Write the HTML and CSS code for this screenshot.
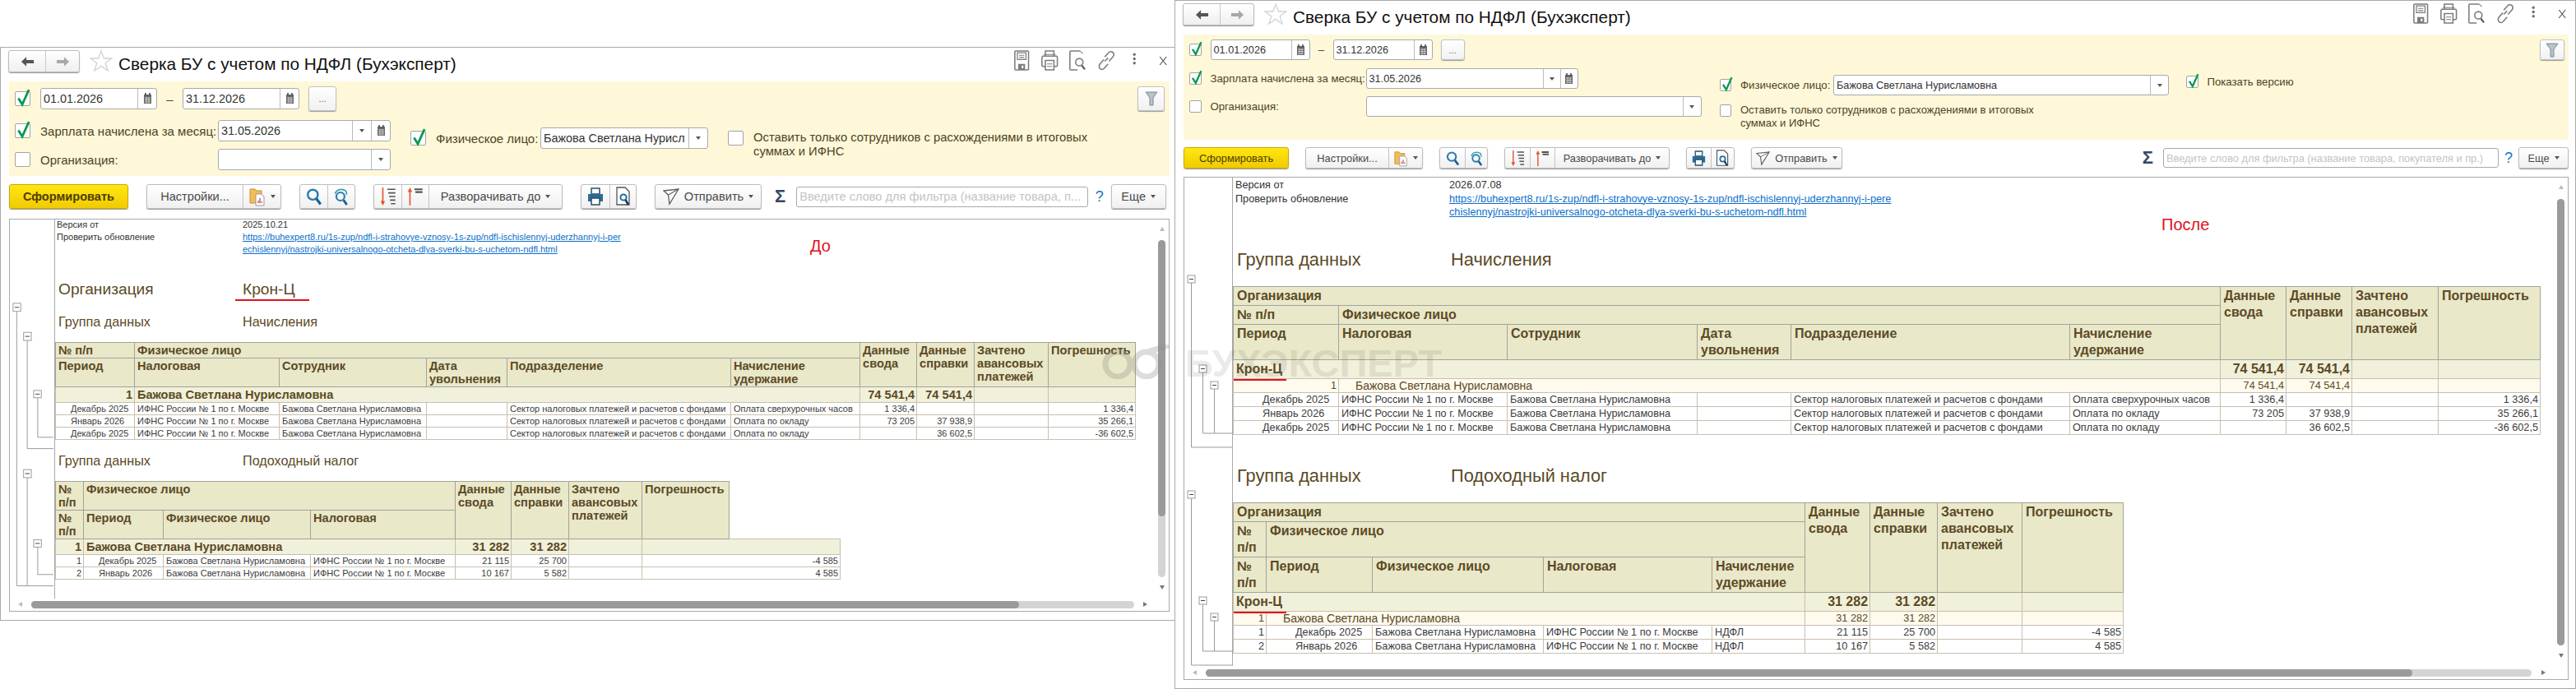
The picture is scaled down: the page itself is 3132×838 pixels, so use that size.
FILE: index.html
```html
<!DOCTYPE html>
<html lang="ru">
<head>
    <meta charset="UTF-8">
    <title>Сверка БУ с учетом по НДФЛ</title>
    <link rel="stylesheet" href="styles.css">
</head>
<body>
    <!-- shared icons -->
    <svg class="defs" width="0" height="0">
        <symbol id="i-back" viewBox="0 0 18 14"><path d="M1 7 7.500 1V5H17V9H7.500V13Z" fill="#555"/></symbol>
        <symbol id="i-fwd" viewBox="0 0 18 14"><path d="M17 7 10.500 1V5H1V9H10.500V13Z" fill="#a8a8a8"/></symbol>
        <symbol id="i-star" viewBox="0 0 28 26"><path d="M14 1 17.300 10H27L19.200 15.800 22.200 25 14 19.400 5.800 25 8.800 15.800 1 10H10.700Z" fill="#fff" stroke="#d0d4d6" stroke-width="1.300"/></symbol>
        <symbol id="i-cal" viewBox="0 0 11 14"><path d="M1 2H10V13H1Z" fill="#666"/><path d="M3 0V3M8 0V3" stroke="#444" stroke-width="1.500"/><path d="M2 6H9M2 8.500H9M2 11H9M4 5V12.500M7 5V12.500" stroke="#ddd" stroke-width=".8"/></symbol>
        <symbol id="i-check" viewBox="0 0 18 24"><path d="M2.500 13 7.500 21 16 2" fill="none" stroke="#0a9a52" stroke-width="3"/></symbol>
        <symbol id="i-folder" viewBox="0 0 20 24"><path d="M1 3H7L9 5H15V20H1Z" fill="#f0bd5a" stroke="#c98f2c"/><path d="M8 9H15L18 12V23H8Z" fill="#fff" stroke="#999"/><path d="M11 20V17M13 20V14M15 20V18" stroke="#c0504d" stroke-width="1.300"/></symbol>
        <symbol id="i-search" viewBox="0 0 18 20"><circle cx="7.500" cy="8" r="5.500" fill="none" stroke="#2a7db0" stroke-width="2.200"/><path d="M11.500 12.500 16 18.500" stroke="#1c5f8c" stroke-width="2.800"/></symbol>
        <symbol id="i-refind" viewBox="0 0 18 20"><circle cx="8" cy="10" r="4.500" fill="none" stroke="#2a7db0" stroke-width="2"/><path d="M11.500 14 15 19" stroke="#1c5f8c" stroke-width="2.600"/><path d="M2 7C4 2 10 1 14 4L15 8" fill="none" stroke="#39a0a8" stroke-width="1.500"/></symbol>
        <symbol id="i-sort-d" viewBox="0 0 18 22"><path d="M3 1V19" stroke="#e0572a" stroke-width="1.500"/><path d="M.5 16 3 21 5.500 16Z" fill="#e0572a"/><path d="M8 3H17M9 7H17M10 11H17M11 15H17M12 19H17" stroke="#555" stroke-width="1.500"/></symbol>
        <symbol id="i-sort-u" viewBox="0 0 18 22"><path d="M3 3V21" stroke="#e0572a" stroke-width="1.500"/><path d="M.5 6 3 1 5.500 6Z" fill="#e0572a"/><path d="M8 3H17M9 6H17" stroke="#555" stroke-width="2"/></symbol>
        <symbol id="i-print" viewBox="0 0 20 22"><path d="M5 1H15V8H5Z" fill="#fff" stroke="#24506e" stroke-width="1.500"/><path d="M1 8H19V17H1Z" fill="#2c6c94"/><path d="M5 13H15V21H5Z" fill="#fff" stroke="#24506e" stroke-width="1.500"/></symbol>
        <symbol id="i-preview" viewBox="0 0 18 24"><path d="M1 1H11L16 6V22H1Z" fill="#fff" stroke="#555" stroke-width="1.300"/><circle cx="9" cy="13" r="3.600" fill="none" stroke="#1c6da0" stroke-width="2"/><path d="M11.500 16 15 22" stroke="#123f60" stroke-width="2.600"/></symbol>
        <symbol id="i-send" viewBox="0 0 20 20"><path d="M1 3 19 1 8 19 6.500 8Z" fill="#fff" stroke="#5c5c5c" stroke-width="1.300"/><path d="M6.500 8 19 1" stroke="#5c5c5c" stroke-width="1.100"/></symbol>
        <symbol id="i-funnel" viewBox="0 0 16 18"><path d="M1 1H15L10 8V17H6V8Z" fill="#b9c2c9" stroke="#7d8a94"/></symbol>
        <symbol id="i-save" viewBox="0 0 18 24"><path d="M1 2C1 1 2 1 2 1H16C17 1 17 2 17 2V22C17 23 16 23 16 23H2C1 23 1 22 1 22Z" fill="none" stroke="#7c7c7c" stroke-width="1.500"/><path d="M4 3H14V11H4Z" fill="none" stroke="#7c7c7c" stroke-width="1.200"/><path d="M6 6H12M6 8.500H12" stroke="#7c7c7c"/><path d="M5 16H13V23H5Z" fill="#7c7c7c"/><path d="M9 18H11V21H9Z" fill="#fff"/></symbol>
        <symbol id="i-hprint" viewBox="0 0 20 24"><path d="M5 7V1H15V7" fill="none" stroke="#7c7c7c" stroke-width="1.500"/><path d="M5 19H2C1 19 1 18 1 18V9C1 8 2 7 2 7H18C19 7 19 8 19 9V18C19 19 18 19 18 19H15" fill="none" stroke="#7c7c7c" stroke-width="1.500"/><path d="M5 12H15V23H5Z" fill="#fff" stroke="#7c7c7c" stroke-width="1.500"/><path d="M7 16H13M7 19H13M3 5H17" stroke="#7c7c7c"/></symbol>
        <symbol id="i-hdoc" viewBox="0 0 20 24"><path d="M13 1H2C1 1 1 2 1 2V22C1 23 2 23 2 23H10" fill="none" stroke="#7c7c7c" stroke-width="1.500"/><path d="M13 1 16 4" stroke="#7c7c7c"/><circle cx="12" cy="14" r="4.300" fill="none" stroke="#7c7c7c" stroke-width="1.500"/><path d="M15 18 18.500 22.500" stroke="#555" stroke-width="2"/></symbol>
        <symbol id="i-link" viewBox="0 0 20 24"><path d="M8 8 12 3.500C13.500 1.500 16 1 17.500 2.500S19 6 17.500 8L13 13M12 9 8 13M12 16 7.500 21C6 23 3.500 23 2.500 21.500S1 18 2.500 16L7 11" fill="none" stroke="#7c7c7c" stroke-width="1.500"/></symbol>
        <symbol id="i-dots" viewBox="0 0 6 20"><circle cx="3" cy="3" r="2.200" fill="#6f6f6f"/><circle cx="3" cy="10" r="2.200" fill="#6f6f6f"/><circle cx="3" cy="17" r="2.200" fill="#6f6f6f"/></symbol>
        <symbol id="i-close" viewBox="0 0 10 12"><path d="M1 1 9 11M9 1 1 11" stroke="#555" stroke-width="1.200"/></symbol>
    </svg>

    <!-- watermark lies over both windows -->
    <svg class="wm-logo" viewBox="0 0 82 42"><circle cx="19" cy="24" r="15" fill="none" stroke="#8f8f86" stroke-width="7"/><circle cx="54" cy="24" r="15" fill="none" stroke="#8f8f86" stroke-width="7"/><path d="M55 9 81 1" stroke="#8f8f86" stroke-width="7"/></svg>
    <div class="wm-text">БУХЭКСПЕРТ</div>

    <section class="win win-a">
        <header class="head">
            <div class="nav">
                <button><svg class="ic-arrow"><use href="#i-back"/></svg></button>
                <button><svg class="ic-arrow"><use href="#i-fwd"/></svg></button>
            </div>
            <svg class="star"><use href="#i-star"/></svg>
            <h1>Сверка БУ с учетом по НДФЛ (Бухэксперт)</h1>
            <div class="head-icons">
                <svg><use href="#i-save"/></svg>
                <svg><use href="#i-hprint"/></svg>
                <svg><use href="#i-hdoc"/></svg>
                <svg><use href="#i-link"/></svg>
                <svg class="ic-dots"><use href="#i-dots"/></svg>
                <svg class="ic-close"><use href="#i-close"/></svg>
            </div>
        </header>

        <div class="filters">
            <div class="filter-col">
                <div class="row row-period">
                    <span class="cb on"><svg><use href="#i-check"/></svg></span>
                    <div class="field f-date"><span>01.01.2026</span><i><svg class="ic-cal"><use href="#i-cal"/></svg></i></div>
                    <span class="dash">–</span>
                    <div class="field f-date"><span>31.12.2026</span><i><svg class="ic-cal"><use href="#i-cal"/></svg></i></div>
                    <button class="btn-more">...</button>
                </div>
                <div class="row row-salary">
                    <span class="cb on"><svg><use href="#i-check"/></svg></span>
                    <label>Зарплата начислена за месяц:</label>
                    <div class="field f-month"><span>31.05.2026</span><i><b class="caret"></b></i><i><svg class="ic-cal"><use href="#i-cal"/></svg></i></div>
                </div>
                <div class="row row-org">
                    <span class="cb"></span>
                    <label>Организация:</label>
                    <div class="field f-org"><span></span><i><b class="caret"></b></i></div>
                </div>
            </div>
            <div class="filter-mid">
                <div class="row row-person">
                    <span class="cb on"><svg><use href="#i-check"/></svg></span>
                    <label>Физическое лицо:</label>
                    <div class="field f-person"><span>Бажова Светлана Нурисл</span><i><b class="caret"></b></i></div>
                </div>
                <div class="row row-only">
                    <span class="cb"></span>
                    <label>Оставить только сотрудников с расхождениями в итоговых<br>суммах и ИФНС</label>
                </div>
            </div>
            <button class="btn-filter"><svg><use href="#i-funnel"/></svg></button>
        </div>

        <div class="toolbar">
            <button class="btn-main">Сформировать</button>
            <div class="group g-settings">
                <span>Настройки...</span>
                <span><svg class="ic-tb"><use href="#i-folder"/></svg><b class="caret"></b></span>
            </div>
            <div class="group g-search">
                <span><svg class="ic-tb"><use href="#i-search"/></svg></span>
                <span><svg class="ic-tb"><use href="#i-refind"/></svg></span>
            </div>
            <div class="group g-expand">
                <span><svg class="ic-tb"><use href="#i-sort-d"/></svg></span>
                <span><svg class="ic-tb"><use href="#i-sort-u"/></svg></span>
                <span>Разворачивать до<b class="caret"></b></span>
            </div>
            <div class="group g-print">
                <span><svg class="ic-tb"><use href="#i-print"/></svg></span>
                <span><svg class="ic-tb"><use href="#i-preview"/></svg></span>
            </div>
            <div class="group g-send">
                <span><svg class="ic-tb"><use href="#i-send"/></svg>Отправить<b class="caret"></b></span>
            </div>
            <span class="sigma">Σ</span>
            <div class="search-box">Введите слово для фильтра (название товара, п...</div>
            <span class="help">?</span>
            <div class="group g-more"><span>Еще<b class="caret"></b></span></div>
        </div>

        <div class="frame">
            <div class="gutter">
                <svg viewBox="12 267 55 462">
                    <path class="tree" d="M20.500 377V717H66M33.500 413V547H66M46.500 484V533H66M33.500 583V717M46.500 669V703H66"/>
                    <g class="node"><rect x="16" y="367" width="9.500" height="10"/><path d="M18 372H23.500"/></g>
                    <g class="node"><rect x="29" y="403" width="9.500" height="10"/><path d="M31 408H36.500"/></g>
                    <g class="node"><rect x="41.500" y="475" width="9.500" height="9"/><path d="M43.500 479.500H49"/></g>
                    <g class="node"><rect x="29" y="573" width="9.500" height="10"/><path d="M31 578H36.500"/></g>
                    <g class="node"><rect x="41.500" y="660" width="9.500" height="9"/><path d="M43.500 664.500H49"/></g>
                </svg>
            </div>
            <div class="sheet">
                <div class="meta">
                    <span>Версия от</span><span>2025.10.21</span>
                    <span>Проверить обновление</span>
                    <a href="#">https://buhexpert8.ru/1s-zup/ndfl-i-strahovye-vznosy-1s-zup/ndfl-ischislennyj-uderzhannyj-i-per<br>echislennyj/nastrojki-universalnogo-otcheta-dlya-sverki-bu-s-uchetom-ndfl.html</a>
                </div>
                <div class="line line-org"><span>Организация</span><span class="marked">Крон-Ц</span></div>
                <div class="line line-group"><span>Группа данных</span><span>Начисления</span></div>
                <table class="rep t1">
                    <colgroup><col width="96"><col width="176"><col width="179"><col width="98"><col width="272"><col width="157"><col width="69"><col width="70"><col width="90"><col width="106"></colgroup>
                    <tr class="h19"><th>№ п/п</th><th colspan="5">Физическое лицо</th><th rowspan="2">Данные<br>свода</th><th rowspan="2">Данные<br>справки</th><th rowspan="2">Зачтено<br>авансовых<br>платежей</th><th rowspan="2">Погрешность</th></tr>
                    <tr class="h35"><th>Период</th><th>Налоговая</th><th>Сотрудник</th><th>Дата<br>увольнения</th><th>Подразделение</th><th>Начисление<br>удержание</th></tr>
                    <tr class="grp h19"><td class="num">1</td><td colspan="5">Бажова Светлана Нурисламовна</td><td class="num">74 541,4</td><td class="num">74 541,4</td><td></td><td></td></tr>
                    <tr class="dat"><td class="per">Декабрь 2025</td><td>ИФНС России № 1 по г. Москве</td><td>Бажова Светлана Нурисламовна</td><td></td><td>Сектор налоговых платежей и расчетов с фондами</td><td>Оплата сверхурочных часов</td><td class="num">1 336,4</td><td></td><td></td><td class="num">1 336,4</td></tr>
                    <tr class="dat"><td class="per">Январь 2026</td><td>ИФНС России № 1 по г. Москве</td><td>Бажова Светлана Нурисламовна</td><td></td><td>Сектор налоговых платежей и расчетов с фондами</td><td>Оплата по окладу</td><td class="num">73 205</td><td class="num">37 938,9</td><td></td><td class="num">35 266,1</td></tr>
                    <tr class="dat"><td class="per">Декабрь 2025</td><td>ИФНС России № 1 по г. Москве</td><td>Бажова Светлана Нурисламовна</td><td></td><td>Сектор налоговых платежей и расчетов с фондами</td><td>Оплата по окладу</td><td></td><td class="num">36 602,5</td><td></td><td class="num">-36 602,5</td></tr>
                </table>
                <div class="line line-group2"><span>Группа данных</span><span>Подоходный налог</span></div>
                <table class="rep t2">
                    <colgroup><col width="34"><col width="97"><col width="179"><col width="176"><col width="68"><col width="70"><col width="89"><col width="106"><col width="135"></colgroup>
                    <tr class="h35"><th>№<br>п/п</th><th colspan="3">Физическое лицо</th><th rowspan="2">Данные<br>свода</th><th rowspan="2">Данные<br>справки</th><th rowspan="2">Зачтено<br>авансовых<br>платежей</th><th rowspan="2">Погрешность</th><th rowspan="2" class="blank"></th></tr>
                    <tr class="h35"><th>№<br>п/п</th><th>Период</th><th>Физическое лицо</th><th>Налоговая</th></tr>
                    <tr class="grp h19"><td class="num">1</td><td colspan="3">Бажова Светлана Нурисламовна</td><td class="num">31 282</td><td class="num">31 282</td><td></td><td colspan="2"></td></tr>
                    <tr class="dat"><td class="num">1</td><td class="per">Декабрь 2025</td><td>Бажова Светлана Нурисламовна</td><td>ИФНС России № 1 по г. Москве</td><td class="num">21 115</td><td class="num">25 700</td><td></td><td colspan="2" class="num">-4 585</td></tr>
                    <tr class="dat"><td class="num">2</td><td class="per">Январь 2026</td><td>Бажова Светлана Нурисламовна</td><td>ИФНС России № 1 по г. Москве</td><td class="num">10 167</td><td class="num">5 582</td><td></td><td colspan="2" class="num">4 585</td></tr>
                </table>
                <div class="note">До</div>
            </div>
            <b class="arr arr-up"></b><b class="arr arr-down"></b><b class="arr arr-left"></b><b class="arr arr-right"></b>
            <div class="vbar"><i></i></div>
            <div class="hbar"><i></i></div>
        </div>
    </section>

    <section class="win win-b">
        <header class="head">
            <div class="nav">
                <button><svg class="ic-arrow"><use href="#i-back"/></svg></button>
                <button><svg class="ic-arrow"><use href="#i-fwd"/></svg></button>
            </div>
            <svg class="star"><use href="#i-star"/></svg>
            <h1>Сверка БУ с учетом по НДФЛ (Бухэксперт)</h1>
            <div class="head-icons">
                <svg><use href="#i-save"/></svg>
                <svg><use href="#i-hprint"/></svg>
                <svg><use href="#i-hdoc"/></svg>
                <svg><use href="#i-link"/></svg>
                <svg class="ic-dots"><use href="#i-dots"/></svg>
                <svg class="ic-close"><use href="#i-close"/></svg>
            </div>
        </header>

        <div class="filters">
            <div class="filter-col">
                <div class="row row-period">
                    <span class="cb on"><svg><use href="#i-check"/></svg></span>
                    <div class="field f-date"><span>01.01.2026</span><i><svg class="ic-cal"><use href="#i-cal"/></svg></i></div>
                    <span class="dash">–</span>
                    <div class="field f-date"><span>31.12.2026</span><i><svg class="ic-cal"><use href="#i-cal"/></svg></i></div>
                    <button class="btn-more">...</button>
                </div>
                <div class="row row-salary">
                    <span class="cb on"><svg><use href="#i-check"/></svg></span>
                    <label>Зарплата начислена за месяц:</label>
                    <div class="field f-month"><span>31.05.2026</span><i><b class="caret"></b></i><i><svg class="ic-cal"><use href="#i-cal"/></svg></i></div>
                </div>
                <div class="row row-org">
                    <span class="cb"></span>
                    <label>Организация:</label>
                    <div class="field f-org"><span></span><i><b class="caret"></b></i></div>
                </div>
            </div>
            <div class="filter-mid">
                <div class="row row-person">
                    <span class="cb on"><svg><use href="#i-check"/></svg></span>
                    <label>Физическое лицо:</label>
                    <div class="field f-person"><span>Бажова Светлана Нурисламовна</span><i><b class="caret"></b></i></div>
                </div>
                <div class="row row-only">
                    <span class="cb"></span>
                    <label>Оставить только сотрудников с расхождениями в итоговых<br>суммах и ИФНС</label>
                </div>
            </div>
            <div class="row row-version">
                <span class="cb on"><svg><use href="#i-check"/></svg></span>
                <label>Показать версию</label>
            </div>
            <button class="btn-filter"><svg><use href="#i-funnel"/></svg></button>
        </div>

        <div class="toolbar">
            <button class="btn-main">Сформировать</button>
            <div class="group g-settings">
                <span>Настройки...</span>
                <span><svg class="ic-tb"><use href="#i-folder"/></svg><b class="caret"></b></span>
            </div>
            <div class="group g-search">
                <span><svg class="ic-tb"><use href="#i-search"/></svg></span>
                <span><svg class="ic-tb"><use href="#i-refind"/></svg></span>
            </div>
            <div class="group g-expand">
                <span><svg class="ic-tb"><use href="#i-sort-d"/></svg></span>
                <span><svg class="ic-tb"><use href="#i-sort-u"/></svg></span>
                <span>Разворачивать до<b class="caret"></b></span>
            </div>
            <div class="group g-print">
                <span><svg class="ic-tb"><use href="#i-print"/></svg></span>
                <span><svg class="ic-tb"><use href="#i-preview"/></svg></span>
            </div>
            <div class="group g-send">
                <span><svg class="ic-tb"><use href="#i-send"/></svg>Отправить<b class="caret"></b></span>
            </div>
            <span class="sigma">Σ</span>
            <div class="search-box">Введите слово для фильтра (название товара, покупателя и пр.)</div>
            <span class="help">?</span>
            <div class="group g-more"><span>Еще<b class="caret"></b></span></div>
        </div>

        <div class="frame">
            <div class="gutter">
                <svg viewBox="1440 216 58 594">
                    <path class="tree" d="M1448.500 344V544H1498M1462.500 453V527H1498M1476.500 473V527M1448.500 606V809H1498M1462.500 735V792H1498M1476.500 755V792"/>
                    <g class="node"><rect x="1444" y="335" width="9" height="9"/><path d="M1446 339.500H1451"/></g>
                    <g class="node"><rect x="1458" y="444" width="9" height="9"/><path d="M1460 448.500H1465"/></g>
                    <g class="node"><rect x="1472" y="464" width="9" height="9"/><path d="M1474 468.500H1479"/></g>
                    <g class="node"><rect x="1444" y="597" width="9" height="9"/><path d="M1446 601.500H1451"/></g>
                    <g class="node"><rect x="1458" y="726" width="9" height="9"/><path d="M1460 730.500H1465"/></g>
                    <g class="node"><rect x="1472" y="746" width="9" height="9"/><path d="M1474 750.500H1479"/></g>
                </svg>
            </div>
            <div class="sheet">
                <div class="meta">
                    <span>Версия от</span><span>2026.07.08</span>
                    <span>Проверить обновление</span>
                    <a href="#">https://buhexpert8.ru/1s-zup/ndfl-i-strahovye-vznosy-1s-zup/ndfl-ischislennyj-uderzhannyj-i-pere<br>chislennyj/nastrojki-universalnogo-otcheta-dlya-sverki-bu-s-uchetom-ndfl.html</a>
                </div>
                <div class="line line-group"><span>Группа данных</span><span>Начисления</span></div>
                <table class="rep t1">
                    <colgroup><col width="128"><col width="205"><col width="231"><col width="114"><col width="339"><col width="183"><col width="80"><col width="80"><col width="105"><col width="124"></colgroup>
                    <tr class="h23"><th colspan="6">Организация</th><th rowspan="3">Данные<br>свода</th><th rowspan="3">Данные<br>справки</th><th rowspan="3">Зачтено<br>авансовых<br>платежей</th><th rowspan="3">Погрешность</th></tr>
                    <tr class="h23"><th>№ п/п</th><th colspan="5">Физическое лицо</th></tr>
                    <tr class="h43"><th>Период</th><th>Налоговая</th><th>Сотрудник</th><th>Дата<br>увольнения</th><th>Подразделение</th><th>Начисление<br>удержание</th></tr>
                    <tr class="grp h23"><td colspan="6"><span class="marked">Крон-Ц</span></td><td class="num">74 541,4</td><td class="num">74 541,4</td><td></td><td></td></tr>
                    <tr class="sub"><td class="num">1</td><td colspan="5" class="name">Бажова Светлана Нурисламовна</td><td class="num">74 541,4</td><td class="num">74 541,4</td><td></td><td></td></tr>
                    <tr class="dat"><td class="per">Декабрь 2025</td><td>ИФНС России № 1 по г. Москве</td><td>Бажова Светлана Нурисламовна</td><td></td><td>Сектор налоговых платежей и расчетов с фондами</td><td>Оплата сверхурочных часов</td><td class="num">1 336,4</td><td></td><td></td><td class="num">1 336,4</td></tr>
                    <tr class="dat"><td class="per">Январь 2026</td><td>ИФНС России № 1 по г. Москве</td><td>Бажова Светлана Нурисламовна</td><td></td><td>Сектор налоговых платежей и расчетов с фондами</td><td>Оплата по окладу</td><td class="num">73 205</td><td class="num">37 938,9</td><td></td><td class="num">35 266,1</td></tr>
                    <tr class="dat"><td class="per">Декабрь 2025</td><td>ИФНС России № 1 по г. Москве</td><td>Бажова Светлана Нурисламовна</td><td></td><td>Сектор налоговых платежей и расчетов с фондами</td><td>Оплата по окладу</td><td></td><td class="num">36 602,5</td><td></td><td class="num">-36 602,5</td></tr>
                </table>
                <div class="line line-group2"><span>Группа данных</span><span>Подоходный налог</span></div>
                <table class="rep t2">
                    <colgroup><col width="40"><col width="129"><col width="208"><col width="205"><col width="113"><col width="79"><col width="82"><col width="103"><col width="123"></colgroup>
                    <tr class="h23"><th colspan="5">Организация</th><th rowspan="3">Данные<br>свода</th><th rowspan="3">Данные<br>справки</th><th rowspan="3">Зачтено<br>авансовых<br>платежей</th><th rowspan="3">Погрешность</th></tr>
                    <tr class="h43"><th>№<br>п/п</th><th colspan="4">Физическое лицо</th></tr>
                    <tr class="h43"><th>№<br>п/п</th><th>Период</th><th>Физическое лицо</th><th>Налоговая</th><th>Начисление<br>удержание</th></tr>
                    <tr class="grp h23"><td colspan="5"><span class="marked">Крон-Ц</span></td><td class="num">31 282</td><td class="num">31 282</td><td></td><td></td></tr>
                    <tr class="sub"><td class="num">1</td><td colspan="4" class="name">Бажова Светлана Нурисламовна</td><td class="num">31 282</td><td class="num">31 282</td><td></td><td></td></tr>
                    <tr class="dat"><td class="num">1</td><td class="per">Декабрь 2025</td><td>Бажова Светлана Нурисламовна</td><td>ИФНС России № 1 по г. Москве</td><td>НДФЛ</td><td class="num">21 115</td><td class="num">25 700</td><td></td><td class="num">-4 585</td></tr>
                    <tr class="dat"><td class="num">2</td><td class="per">Январь 2026</td><td>Бажова Светлана Нурисламовна</td><td>ИФНС России № 1 по г. Москве</td><td>НДФЛ</td><td class="num">10 167</td><td class="num">5 582</td><td></td><td class="num">4 585</td></tr>
                </table>
                <div class="note">После</div>
            </div>
            <b class="arr arr-up"></b><b class="arr arr-down"></b><b class="arr arr-left"></b><b class="arr arr-right"></b>
            <div class="vbar"><i></i></div>
            <div class="hbar"><i></i></div>
        </div>
    </section>
</body>
</html>
```

FILE: styles.css
```css
body {
    margin: 0;
    background-color: #fff;
    font-family: "Liberation Sans", Arial, sans-serif;
    color: #333;
    overflow: hidden;
}
.defs {
    position: absolute;
}
button {
    font-family: inherit;
    padding: 0;
}

/* two screenshots side by side */
.win {
    position: absolute;
    box-sizing: border-box;
    display: flex;
    flex-direction: column;
    background-color: #fff;
    border: 1px solid #a9a9a9;
}
.win-a {
    left: 0;
    top: 57px;
    width: 1428px;
    height: 698px;
    border-right: none;
    padding: 0 6px 0 9px;
}
.win-b {
    left: 1428px;
    top: 0;
    width: 1704px;
    height: 838px;
    padding: 0 8px 0 10px;
}

/* header */
.head {
    height: 41px;
    flex: none;
    display: flex;
    align-items: flex-start;
    padding-top: 3px;
    box-sizing: border-box;
}
.nav {
    display: grid;
    grid-template-columns: 44px 41px;
    height: 27px;
    border: 1px solid #bbb;
    border-radius: 3px;
    box-sizing: border-box;
    box-shadow: 0 1px 1px #999;
    background: linear-gradient(#fff, #efefef);
}
.win-b .nav {
    margin-left: -1px;
}
.nav button {
    border: none;
    background: none;
    display: flex;
    align-items: center;
    justify-content: center;
}
.nav button + button {
    border-left: 1px solid #c8c8c8;
}
.ic-arrow {
    width: 17px;
    height: 14px;
}
.star {
    width: 28px;
    height: 26px;
    margin-left: 12px;
}
.head h1 {
    margin: 2px 0 0 7px;
    font-weight: normal;
    font-size: 20.800px;
    line-height: 30px;
    color: #111;
}
.head-icons {
    margin-left: auto;
    margin-right: -4px;
    height: 25px;
    display: flex;
    align-items: center;
    gap: 10px;
}
.head-icons svg {
    width: 24.400px;
    height: 25px;
}
.head-icons .ic-dots {
    height: 15px;
    margin-top: -4px;
}
.head-icons .ic-close {
    height: 12px;
}

/* yellow filter panel */
.filters {
    flex: none;
    display: flex;
    box-sizing: border-box;
    background-color: #fef8d9;
}
.win-a .filters {
    --fs: 15px;
    --ffs: 14.400px;
    height: 115px;
    padding: 6px 6px 0 7px;
    margin-left: 1px;
}
.win-b .filters {
    --fs: 13.200px;
    --ffs: 12.700px;
    height: 128px;
    padding: 6px 5px 0 7px;
}
.row {
    display: flex;
    align-items: center;
}
.filters label {
    font-size: var(--fs);
    color: #4e4326;
    white-space: nowrap;
}
.win-a .row-only label {
    font-size: 14.800px;
}
.win-b .row-only label {
    font-size: 13px;
}
.cb {
    position: relative;
    flex: none;
    box-sizing: border-box;
    border: 1px solid #a3a3a3;
    border-radius: 2px;
    background-color: #fff;
}
.cb svg {
    position: absolute;
    left: 1px;
    top: -5px;
}
.win-a .cb {
    width: 19px;
    height: 18px;
    margin-right: 12px;
}
.win-a .cb svg {
    width: 17px;
    height: 23px;
}
.win-b .cb {
    width: 14.500px;
    height: 15px;
    margin-right: 11px;
}
.win-b .cb svg {
    width: 14px;
    height: 20px;
}
.field {
    flex: none;
    display: flex;
    box-sizing: border-box;
    border: 1px solid #a9a9a9;
    border-radius: 3px;
    background-color: #fff;
    font-size: var(--ffs);
    color: #333;
}
.field span {
    flex: 1;
    padding-left: 3px;
    white-space: nowrap;
    overflow: hidden;
    align-self: center;
}
.field i {
    flex: none;
    display: flex;
    align-items: center;
    justify-content: center;
    border-left: 1px solid #bbb;
}
.caret {
    display: inline-block;
    width: 0;
    height: 0;
    border-left: 3.500px solid transparent;
    border-right: 3.500px solid transparent;
    border-top: 4px solid #555;
}
.ic-cal {
    width: 11px;
    height: 14px;
}
.dash {
    text-align: center;
    font-size: var(--fs);
    color: #444;
}
.btn-more, .btn-filter {
    flex: none;
    box-sizing: border-box;
    border: 1px solid #c2c2c2;
    border-radius: 3px;
    background: linear-gradient(#fff, #f1f1f1);
    box-shadow: 0 1px 1px #999;
    color: #666;
    font-size: 11px;
    display: flex;
    align-items: center;
    justify-content: center;
}
.btn-filter {
    margin-left: auto;
}
.btn-filter svg {
    width: 16px;
    height: 18px;
}

/* filter sizes, left window */
.win-a .filter-col .row, .win-a .field {
    height: 26px;
}
.win-a .filter-col .row-period {
    height: 30px;
}
.win-a .f-date {
    width: 142px;
}
.win-a .f-date i {
    width: 22px;
}
.win-a .dash {
    width: 31px;
}
.win-a .btn-more {
    width: 34px;
    height: 30px;
    margin-left: 11px;
}
.win-a .row-salary {
    margin-top: 11px;
}
.win-a .row-org {
    margin-top: 9px;
}
.win-a .filter-col label {
    width: 216px;
}
.win-a .f-month, .win-a .f-org {
    width: 210px;
}
.win-a .f-month i {
    width: 22px;
}
.win-a .f-org i {
    width: 22px;
}
.win-a .filter-mid {
    display: flex;
    align-items: flex-start;
    margin: 50px 0 0 24px;
}
.win-a .row-person label {
    width: 127px;
}
.win-a .f-person {
    width: 204px;
}
.win-a .f-person i {
    width: 22px;
}
.win-a .row-only {
    align-items: flex-start;
    margin: 4px 0 0 24px;
    line-height: 17px;
}
.win-a .btn-filter {
    width: 33px;
    height: 30px;
}

/* filter sizes, right window */
.win-b .filter-col .row, .win-b .field {
    height: 25px;
}
.win-b .f-date {
    width: 121px;
}
.win-b .f-date i {
    width: 21px;
}
.win-b .dash {
    width: 28px;
}
.win-b .btn-more {
    width: 29px;
    height: 25px;
    margin-left: 10px;
}
.win-b .row-salary {
    margin-top: 10px;
}
.win-b .row-org {
    margin-top: 9px;
}
.win-b .filter-col label {
    width: 189px;
}
.win-b .f-month {
    width: 258px;
}
.win-b .f-month i {
    width: 20px;
}
.win-b .f-org {
    width: 408px;
}
.win-b .f-org i {
    width: 21px;
}
.win-b .filter-mid {
    margin: 43px 0 0 22px;
}
.win-b .row-person label {
    width: 113px;
}
.win-b .f-person {
    width: 408px;
}
.win-b .f-person i {
    width: 21px;
}
.win-b .row-only {
    align-items: flex-start;
    margin-top: 10px;
    line-height: 16px;
}
.win-b .row-only .cb {
    margin-top: 1px;
}
.win-b .row-version {
    align-items: center;
    height: 17px;
    margin: 43px 0 0 21px;
}
.win-b .btn-filter {
    width: 30px;
    height: 25px;
}

/* toolbar */
.toolbar {
    flex: none;
    display: flex;
    align-items: center;
}
.win-a .toolbar {
    --fs: 14.600px;
    height: 30px;
    margin: 10px 0 12px 1px;
    gap: 22px;
}
.win-b .toolbar {
    --fs: 12.800px;
    height: 26px;
    margin: 9px 0 10px 0;
    gap: 20px;
}
.btn-main {
    flex: none;
    height: 100%;
    box-sizing: border-box;
    border: 1px solid #c9a800;
    border-radius: 3px;
    background: linear-gradient(#ffe713, #f0cb00);
    box-shadow: 0 1px 1px #999;
    font-size: var(--fs);
    font-weight: bold;
    color: #4d3c00;
}
.win-a .btn-main {
    width: 145px;
}
.win-b .btn-main {
    width: 128px;
    font-weight: normal;
}
.group {
    flex: none;
    display: grid;
    height: 100%;
    box-sizing: border-box;
    border: 1px solid #bdbdbd;
    border-radius: 3px;
    background: linear-gradient(#fff, #f0f0f0);
    box-shadow: 0 1px 1px #999;
    font-size: var(--fs);
    color: #4a4a4a;
}
.group span {
    display: flex;
    align-items: center;
    justify-content: center;
    gap: 6px;
    white-space: nowrap;
}
.group span + span {
    border-left: 1px solid #c4c4c4;
}
.ic-tb {
    width: 20px;
    height: 24px;
}
.win-b .ic-tb {
    width: 17px;
    height: 21px;
}
.win-a .g-settings { grid-template-columns: 116px 46px; }
.win-a .g-search { grid-template-columns: 33px 33px; }
.win-a .g-expand { grid-template-columns: 33px 33px 162px; }
.win-a .g-print { grid-template-columns: 34px 32px; }
.win-a .g-send { grid-template-columns: 128px; }
.win-a .g-more { grid-template-columns: 65px; }
.win-b .g-settings { grid-template-columns: 100px 41px; }
.win-b .g-search { grid-template-columns: 30px 27px; }
.win-b .g-expand { grid-template-columns: 30px 30px 139px; }
.win-b .g-print { grid-template-columns: 29px 28px; }
.win-b .g-send { grid-template-columns: 109px; }
.win-b .g-more { grid-template-columns: 59px; }
.sigma {
    font-size: 22px;
    font-weight: bold;
    color: #33495e;
    line-height: 1;
}
.win-a .sigma {
    margin-left: -6px;
}
.win-a .search-box {
    width: 354.500px;
    height: 25px;
    margin-left: -9px;
}
.win-a .help {
    margin-left: -13px;
}
.win-a .g-more {
    margin-left: -13px;
}
.win-b .sigma {
    margin-left: auto;
}
.win-b .search-box {
    width: 408px;
    height: 24px;
    margin-left: -8px;
}
.win-b .help {
    margin-left: -13px;
}
.win-b .g-more {
    margin-left: -13px;
}
.search-box {
    flex: none;
    box-sizing: border-box;
    border: 1px solid #a9a9a9;
    border-radius: 3px;
    background-color: #fff;
    padding-left: 3px;
    display: flex;
    align-items: center;
    white-space: nowrap;
    overflow: hidden;
    font-size: var(--fs);
    color: #c4c4c4;
}
.help {
    font-size: 18px;
    color: #1777c4;
}

/* report frame */
.frame {
    position: relative;
    flex: none;
    display: flex;
    align-items: flex-start;
    box-sizing: border-box;
    border: 1px solid #a9a9a9;
    overflow: hidden;
}
.win-a .frame {
    height: 478px;
    margin-left: 1px;
}
.win-b .frame {
    height: 612px;
}
.gutter {
    flex: none;
    border-right: 1px solid #a9a9a9;
}
.gutter svg {
    display: block;
    width: 100%;
    height: 100%;
}
.win-a .gutter {
    width: 54px;
    height: 461px;
}
.win-b .gutter {
    width: 58px;
    height: 594px;
}
.tree {
    fill: none;
    stroke: #9a9a9a;
    stroke-width: 1;
}
.node rect {
    fill: #fff;
    stroke: #9a9a9a;
}
.node path {
    stroke: #444;
}
.sheet {
    flex: 1;
    position: relative;
}
.meta {
    display: grid;
    white-space: nowrap;
}
.meta a {
    color: #0a6fc9;
}
.win-a .meta {
    grid-template-columns: 226px 1fr;
    font-size: 11px;
    line-height: 15px;
    padding-left: 2px;
    margin-top: -1px;
}
.win-b .meta {
    grid-template-columns: 260px 1fr;
    font-size: 12.700px;
    line-height: 16.500px;
    padding: 1px 0 0 3px;
}
.line {
    display: grid;
    color: #5c4a26;
}
.win-a .line {
    grid-template-columns: 224px 1fr;
    padding-left: 4px;
}
.win-b .line {
    grid-template-columns: 260px 1fr;
    padding-left: 5px;
    font-size: 21.800px;
    line-height: 28px;
}
.win-a .line-org {
    font-size: 19.200px;
    line-height: 24px;
    margin-top: 29px;
}
.win-a .line-group {
    font-size: 16.200px;
    line-height: 22px;
    margin-top: 16px;
}
.win-a .line-group2 {
    font-size: 16.200px;
    line-height: 22px;
    margin-top: 14px;
}
.win-b .line-group {
    margin-top: 35px;
}
.win-b .line-group2 {
    margin-top: 36px;
}
.marked {
    position: relative;
    display: inline-block;
}
.marked::after {
    content: "";
    position: absolute;
    height: 2px;
    background-color: #e0101c;
}
.line .marked::after {
    left: -9px;
    width: 90px;
    bottom: -2px;
}
.rep .marked::after {
    left: -3px;
    width: 64px;
    bottom: -5px;
}

/* report tables */
.rep {
    table-layout: fixed;
    border-collapse: collapse;
    white-space: nowrap;
}
.win-a .rep {
    --hfs: 14.600px;
    --dfs: 11px;
    margin-top: 14px;
}
.win-a .t1 { width: 1313px; }
.win-a .t2 { width: 954px; }
.win-b .rep {
    --hfs: 16px;
    --dfs: 12.700px;
    margin-top: 18px;
}
.win-b .t1 { width: 1589px; }
.win-b .t2 { width: 1082px; }
.rep th {
    background-color: #e9e8c9;
    border: 1px solid #a3a39a;
    color: #5c4a26;
    font-size: var(--hfs);
    font-weight: bold;
    text-align: left;
    vertical-align: top;
    padding: 1px 3px;
    line-height: 16px;
}
.win-b .rep th {
    line-height: 20px;
    padding: 1px 4px;
}
.rep th.blank {
    background-color: transparent;
    border: none;
}
.rep td {
    border: 1px solid #c8c0b0;
    padding: 0 2px 0 3px;
    overflow: visible;
    font-size: var(--dfs);
    color: #3c3c3c;
}
.rep .num {
    text-align: right;
}
.h19 { height: 19px; }
.h35 { height: 35px; }
.h23 { height: 23px; }
.h43 { height: 43px; }
.rep .grp td {
    background-color: #f1f0da;
    color: #5c4a26;
    font-size: var(--hfs);
    font-weight: bold;
}
.rep .sub td {
    background-color: #fefaee;
    color: #5c4a26;
}
.rep .name {
    padding-left: 20px;
}
.win-b .rep .name {
    padding-left: 20px;
    font-size: 14px;
}
.win-a .dat { height: 15px; }
.win-b .dat, .win-b .sub { height: 17px; }
.win-a .rep .per { padding-left: 18px; }
.win-b .rep .per { padding-left: 35px; }
.note {
    position: absolute;
    color: #e0101c;
    font-size: 20px;
}
.win-a .note {
    left: 918px;
    top: 21px;
}
.win-b .note {
    left: 1129px;
    top: 46px;
}

/* scrollbars lie over the report */
.vbar, .hbar {
    position: absolute;
    background-color: #d4d4d4;
    border-radius: 5px;
}
.vbar i, .hbar i {
    display: block;
    background-color: #9a9a9a;
    border-radius: 5px;
}
.vbar {
    width: 9px;
    right: 4px;
}
.hbar {
    height: 9px;
    bottom: 3px;
    left: 26px;
}
.vbar i {
    width: 100%;
}
.hbar i {
    height: 100%;
}
.win-a .vbar { top: 25px; height: 410px; }
.win-a .vbar i { height: 336px; }
.win-a .hbar { width: 1341px; }
.win-a .hbar i { width: 1201px; }
.win-b .vbar { top: 26px; height: 543px; }
.win-b .vbar i { height: 543px; }
.win-b .hbar { width: 1612px; }
.win-b .hbar i { width: 1467px; }
.arr {
    position: absolute;
    width: 0;
    height: 0;
    border: 3px solid transparent;
}
.arr-up {
    border-bottom: 5px solid #bbb;
    border-top: none;
    right: 5px;
    top: 9px;
}
.arr-down {
    border-top: 5px solid #777;
    border-bottom: none;
    right: 5px;
}
.arr-left {
    border-right: 5px solid #bbb;
    border-left: none;
    left: 10px;
    bottom: 5px;
}
.arr-right {
    border-left: 5px solid #777;
    border-right: none;
    bottom: 5px;
}
.win-a .arr-down { top: 445px; }
.win-a .arr-right { left: 1378px; }
.win-b .arr-down { top: 579px; }
.win-b .arr-right { left: 1650px; }

/* watermark */
.wm-logo {
    position: absolute;
    z-index: 5;
    left: 1340px;
    top: 419px;
    width: 82px;
    height: 42px;
    opacity: .3;
}
.wm-text {
    position: absolute;
    z-index: 5;
    left: 1441px;
    top: 415px;
    font-size: 47px;
    line-height: 54px;
    font-weight: bold;
    color: rgba(90, 90, 80, .14);
    white-space: nowrap;
}
```
